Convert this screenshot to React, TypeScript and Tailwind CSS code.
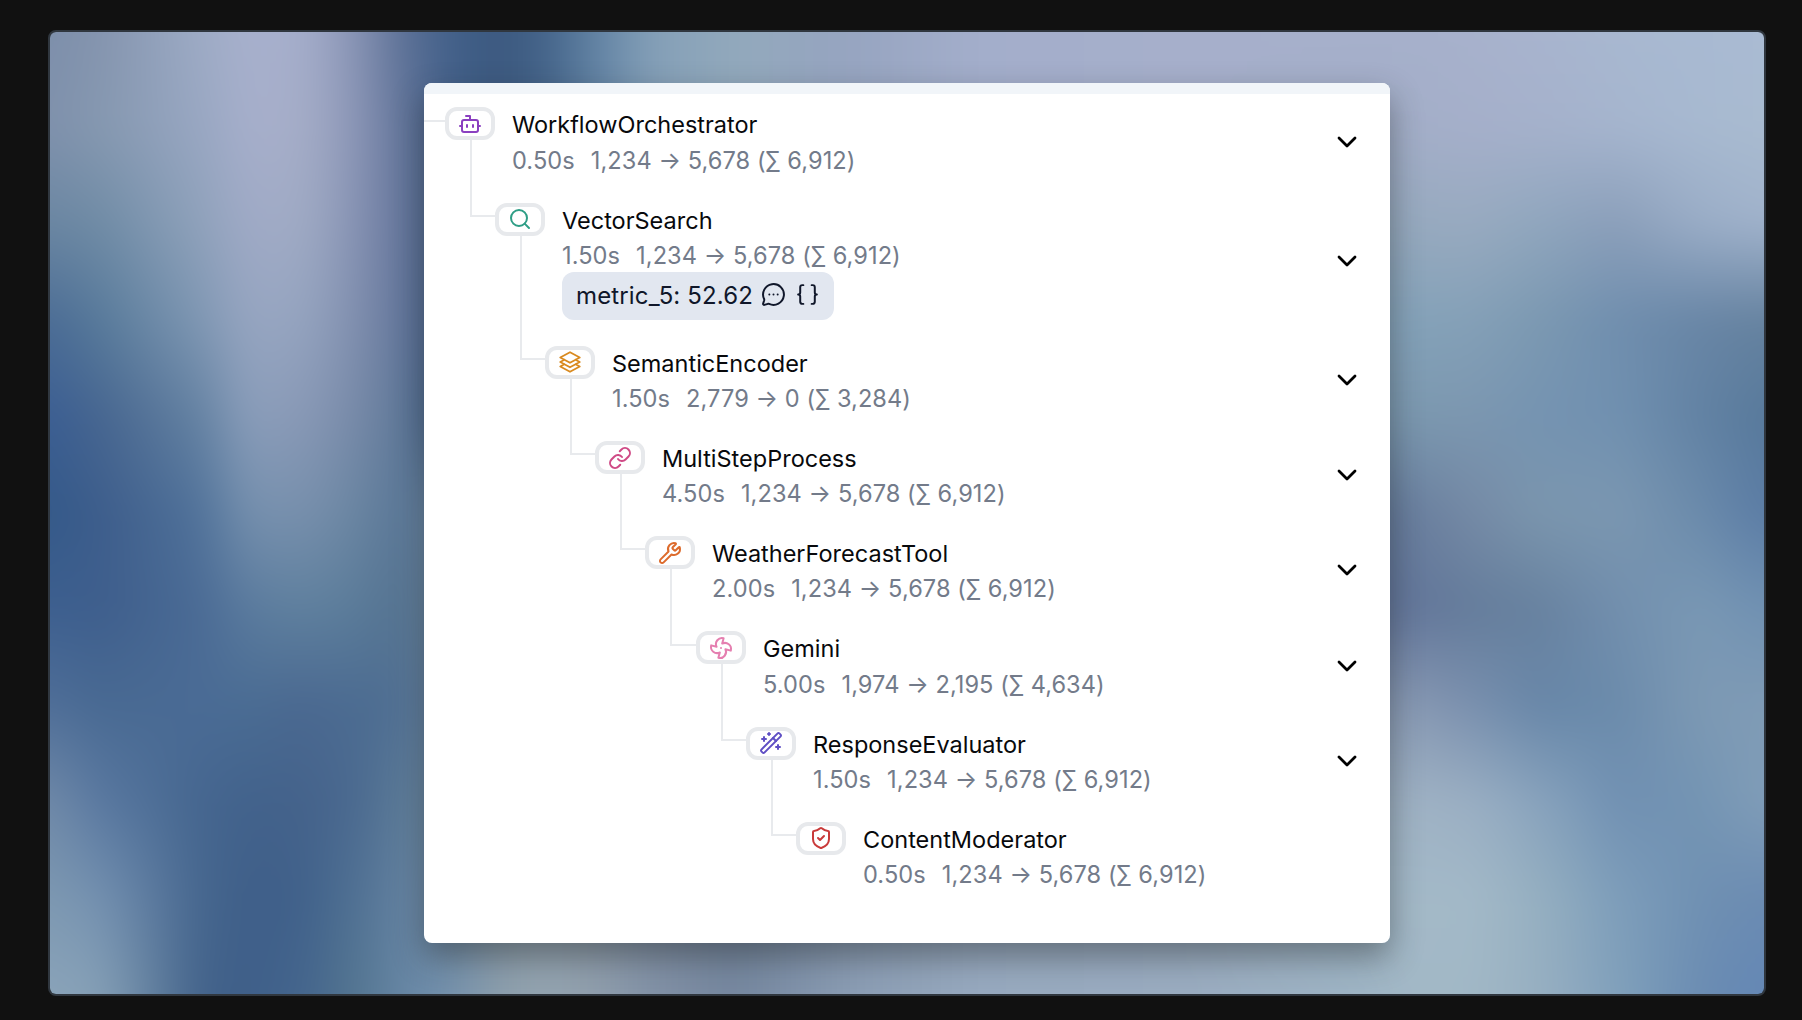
import type { ComponentType, ReactNode, SVGProps } from "react";
import {
  Bot,
  Braces,
  ChevronDown,
  Fan,
  Link,
  MessageCircleMore,
  Search,
  ShieldCheck,
  WandSparkles,
  Wrench,
} from "lucide-react";

type Icon = ComponentType<SVGProps<SVGSVGElement>>;

function Stack(props: SVGProps<SVGSVGElement>) {
  return (
    <svg viewBox="0 0 24 24" fill="none" stroke="currentColor" strokeLinecap="round" strokeLinejoin="round" {...props}>
      <path d="M6.429 9.75 2.25 12l4.179 2.25m0-4.5 5.571 3 5.571-3m-11.142 0L2.25 7.5 12 2.25l9.75 5.25-4.179 2.25m0 0L21.75 12l-4.179 2.25m0 0 4.179 2.25L12 21.75 2.25 16.5l4.179-2.25m11.142 0-5.571 3-5.571-3" />
    </svg>
  );
}

/* Backdrop: colour control points, each a column of eleven evenly spaced stops. */
const edge = (top: string, bottom: string) => [top, top, top, top, top, bottom, bottom, bottom, bottom, bottom, bottom];

const mesh: { x: number; stops: string[] }[] = [
  { x: 50, stops: ["7d8fab", "7f91ac", "6a86a2", "4b6c95", "3b5e93", "345989", "3d5f8f", "4f6e98", "7089a8", "7d98b1", "8aa3b9"] },
  { x: 100, stops: ["8494ae", "8598b0", "6f8ba5", "577a9a", "46658f", "3d5d8b", "3e5e8c", "486992", "5978a0", "7490b0", "86a0b6"] },
  { x: 201, stops: ["9dabc5", "98a7c2", "8fa2bb", "7f97b3", "6482a2", "50729a", "4a6b95", "4a6b95", "45668f", "45668e", "42628a"] },
  { x: 250, stops: ["a7b0cd", "a7afcb", "a0aac6", "97a6c1", "8b9ebb", "7690ae", "5b7b9e", "4a6c93", "42628c", "3f5f89", "3f5f89"] },
  { x: 302, stops: ["a6aecb", "a5adc8", "a0abc5", "95a4c0", "8999b6", "7890ad", "5f809e", "4a6890", "44628a", "40608a", "43648d"] },
  { x: 350, stops: ["8c97b7", "8f99b9", "8a96b6", "8492b1", "7a8caa", "6c87a3", "5c7d9b", "4b6b91", "49688f", "4e6f92", "52748f"] },
  { x: 403, stops: ["5c7196", "64759a", "66769b", "64769b", "5f7898", "587595", "53718f", "4f6e92", "5b7a96", "6381a0", "6686a4"] },
  { x: 450, stops: edge("42608a", "7390ac") },
  { x: 500, stops: edge("3b587e", "8c9eac") },
  { x: 545, stops: edge("44648a", "94a4b0") },
  { x: 600, stops: edge("6485a5", "8f9dac") },
  { x: 650, stops: edge("849fb7", "8291a6") },
  { x: 735, stops: edge("92a9bc", "74869e") },
  { x: 850, stops: edge("96a4c0", "8a9cb3") },
  { x: 977, stops: edge("a3aecb", "97a9bf") },
  { x: 1180, stops: edge("a6afcb", "9aacc0") },
  { x: 1360, stops: ["a6b0cb", "a3aec8", "93a8bb", "84a2b9", "7b98af", "5f7596", "60739a", "8899b3", "9fb2c4", "a3b9c8", "9db3c4"] },
  { x: 1410, stops: ["a6b0cb", "a3aec8", "96a9be", "84a2b9", "7b98af", "687d9d", "627599", "8899b3", "9fb2c4", "a3b9c8", "a3b8c6"] },
  { x: 1470, stops: ["a7b1cc", "a5afca", "98aac0", "84a0b7", "7c97b0", "7489a5", "647c9b", "7a90ae", "9bafc3", "a3b9c8", "a1b8c6"] },
  { x: 1540, stops: ["a8b4ce", "a5b1cb", "8fa6bd", "7b98b1", "7493b1", "7b96ae", "67819f", "6786a8", "88a3bd", "95afc0", "97afc1"] },
  { x: 1620, stops: ["a8b8d0", "a5b5ce", "8a9eb9", "6f8eae", "7090b0", "7b97b1", "728fae", "6b8bab", "7090b2", "7d9dba", "80a0bb"] },
  { x: 1700, stops: ["a8b9d2", "a7b9d0", "9aadc7", "6885a5", "6282a3", "6b8bab", "7a98b4", "7d99b4", "7394b3", "6f90b2", "6b8cb2"] },
  { x: 1764, stops: ["aabbd3", "a9bbd0", "a0b2cb", "65829f", "57799b", "5b7ca5", "7091b2", "7f9bb5", "809db8", "6b8bb2", "6487b5"] },
];

function mix(a: string, b: string, t: number) {
  const channel = (s: string, i: number) => parseInt(s.slice(i * 2, i * 2 + 2), 16);
  const parts = [0, 1, 2].map((i) => Math.round(channel(a, i) * (1 - t) + channel(b, i) * t));
  return `rgb(${parts.join(",")})`;
}

const STRIPS = 92;
const strips = Array.from({ length: STRIPS }, (_, n) => {
  const x = Math.min(1764, Math.max(50, 2 + ((n + 0.5) / STRIPS) * 1810));
  const right = Math.max(1, mesh.findIndex((c) => c.x >= x));
  const a = mesh[right - 1];
  const b = mesh[right];
  const t = (x - a.x) / (b.x - a.x);
  return `linear-gradient(to bottom, ${a.stops
    .map((s, i) => `${mix(s, b.stops[i], t)} ${(48 + i * 96.2).toFixed(1)}px`)
    .join(", ")})`;
});

function Backdrop() {
  return (
    <div className="absolute -inset-12 flex blur-[18px]">
      {strips.map((backgroundImage, i) => (
        <div key={i} className="flex-1" style={{ backgroundImage }} />
      ))}
    </div>
  );
}

type Span = {
  name: string;
  time: string;
  tokens: string;
  icon: Icon;
  tint: string;
  stroke: number;
  extra?: ReactNode;
};

const metric = (
  <div className="-mt-px mb-px flex h-12 w-[272px] items-center rounded-xl bg-[#e2e7f0] pl-[14px] text-[#10172a]">
    <span className="text-[24px] tracking-[0.14px]">metric_5: 52.62</span>
    <MessageCircleMore className="-mt-0.5 ml-2 size-[25px]" strokeWidth={1.9} />
    <Braces className="-mt-0.5 ml-[9px] size-[25px]" strokeWidth={1.9} />
  </div>
);

const spans: Span[] = [
  { name: "WorkflowOrchestrator", time: "0.50s", tokens: "1,234 → 5,678 (∑ 6,912)", icon: Bot, tint: "text-[#8a3fc0]", stroke: 2 },
  { name: "VectorSearch", time: "1.50s", tokens: "1,234 → 5,678 (∑ 6,912)", icon: Search, tint: "text-[#2f9e86]", stroke: 2, extra: metric },
  { name: "SemanticEncoder", time: "1.50s", tokens: "2,779 → 0 (∑ 3,284)", icon: Stack, tint: "text-[#d98a1f]", stroke: 1.8 },
  { name: "MultiStepProcess", time: "4.50s", tokens: "1,234 → 5,678 (∑ 6,912)", icon: Link, tint: "text-[#cf4a86]", stroke: 2 },
  { name: "WeatherForecastTool", time: "2.00s", tokens: "1,234 → 5,678 (∑ 6,912)", icon: Wrench, tint: "text-[#dd6b2c]", stroke: 2 },
  { name: "Gemini", time: "5.00s", tokens: "1,974 → 2,195 (∑ 4,634)", icon: Fan, tint: "text-[#e57fb0]", stroke: 2 },
  { name: "ResponseEvaluator", time: "1.50s", tokens: "1,234 → 5,678 (∑ 6,912)", icon: WandSparkles, tint: "text-[#5f4fc4]", stroke: 2 },
  { name: "ContentModerator", time: "0.50s", tokens: "1,234 → 5,678 (∑ 6,912)", icon: ShieldCheck, tint: "text-[#c93a3a]", stroke: 2 },
];

/* Left edge of the badge at a given depth; the trunk below a badge starts 25px in. */
const badgeLeft = (depth: number) => 21 + Math.floor(depth * 50.2);

function Elbow({ depth }: { depth: number }) {
  if (depth === 0) {
    return <div className="h-[27.5px] w-[21px] shrink-0 border-b-2 border-[#e8eaed]" />;
  }
  const start = badgeLeft(depth - 1) + 25;
  return (
    <div
      className="h-[27.5px] shrink-0 border-b-2 border-l-2 border-[#e8eaed]"
      style={{ marginLeft: start, width: badgeLeft(depth) - start }}
    />
  );
}

function SpanRow({ span, depth, last }: { span: Span; depth: number; last: boolean }) {
  const SpanIcon = span.icon;
  return (
    <div className="flex">
      <Elbow depth={depth} />
      <div className="flex w-[50px] shrink-0 flex-col pt-[13.4px]">
        <div className="flex h-[33px] w-full shrink-0 items-center justify-center rounded-[12px] border-4 border-[#e7e9ec] bg-white">
          <SpanIcon className={`size-6 shrink-0 ${span.tint}`} strokeWidth={span.stroke} />
        </div>
        {!last && <div className="ml-[25px] w-[2px] flex-1 bg-[#e8eaed]" />}
      </div>
      <div className="ml-[17px] flex-1 pt-[13.3px] pb-[11.5px] leading-[35.2px]">
        <div className="text-[23.5px] text-[#08090c]">{span.name}</div>
        <div className="flex gap-4 text-[23.6px] tracking-[0.07px] text-[#737b8a]">
          <span>{span.time}</span>
          <span>{span.tokens}</span>
        </div>
        {span.extra}
      </div>
      {!last && (
        <div className="flex w-[59px] items-center">
          <ChevronDown className="size-8 text-black" strokeWidth={2.1} />
        </div>
      )}
    </div>
  );
}

export default function App() {
  return (
    <div className="h-[1020px] w-[1802px] bg-[#111111] pt-[30px] pl-12 font-['Inter',sans-serif]">
      <div className="relative flex h-[966px] w-[1718px] items-start overflow-hidden rounded-lg border-2 border-[#30373f]">
        <Backdrop />
        <div className="relative mt-[51px] ml-[374px] h-[860px] w-[966px] rounded-lg shadow-[0_14px_32px_rgba(35,40,42,0.45)]">
          <div className="h-full overflow-hidden rounded-lg bg-white">
            <div className="h-[11px] bg-[#f1f5f9]" />
            {spans.map((span, i) => (
              <SpanRow key={span.name} span={span} depth={i} last={i === spans.length - 1} />
            ))}
          </div>
        </div>
      </div>
    </div>
  );
}
